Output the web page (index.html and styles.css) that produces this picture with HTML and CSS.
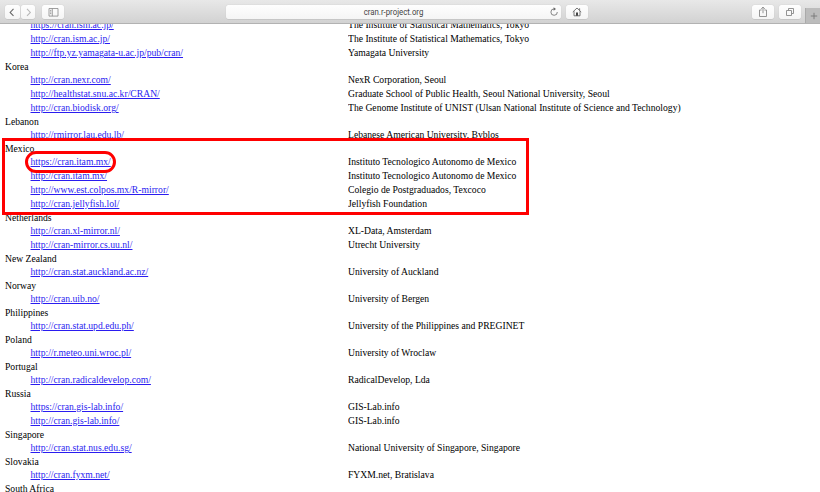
FILE: index.html
```html
<!DOCTYPE html>
<html lang="en">
<head>
<meta charset="utf-8">
<title>CRAN Mirrors</title>
<link rel="stylesheet" href="styles.css">
</head>
<body>
<header class="toolbar">
  <div class="nav">
    <span class="btn back"><svg width="15" height="15" viewBox="0 0 15 15"><path d="M8.8 3.8 5.3 7.4l3.5 3.6" stroke="#666" stroke-width="1.1"/></svg></span>
    <span class="btn forward"><svg width="15" height="15" viewBox="0 0 15 15"><path d="M6.2 3.8 9.7 7.4 6.2 11" stroke="#b8b8b8" stroke-width="1.1"/></svg></span>
  </div>
  <span class="btn sidebar"><svg width="11" height="9" viewBox="0 0 11 9"><path d="M1 .5h9v7.6H1zM4.3.5v7.6M2 2.4h1.3M2 4h1.3M2 5.6h1.3" stroke="#888" stroke-width=".8"/></svg></span>
  <div class="address"><span>cran.r-project.org</span><svg class="reload" width="10" height="10" viewBox="0 0 10 10"><path d="M5.2 1.9A3.2 3.2 0 1 0 8.3 5" stroke="#777" stroke-width=".9"/><path d="M4.6.2 7 2 4.6 3.7z" fill="#666"/></svg></div>
  <span class="btn home"><svg width="10" height="10" viewBox="0 0 10 10"><path d="M.8 5 5 1l4.2 4M2 4.2v4.6h6V4.2M7.6 3.2V1.3" stroke="#666" stroke-width=".9"/><path d="M4 5.6h2v3.2H4z" fill="#444"/></svg></span>
  <span class="btn share"><svg width="10" height="12" viewBox="0 0 10 12"><path d="M3.6 4H1.5v6.5h7V4H6.4M5 7.2V1.2M3.2 2.9 5 1.1l1.8 1.8" stroke="#888" stroke-width=".9"/></svg></span>
  <span class="btn tabs"><svg width="10" height="10" viewBox="0 0 10 10"><path d="M1.5 3.5h5v5h-5zM3.5 3.3V1.5h5v5H6.7" stroke="#888" stroke-width=".9"/></svg></span>
  <span class="newtab"><svg width="8" height="8" viewBox="0 0 8 8"><path d="M4 .8v6.4M.8 4h6.4" stroke="#777" stroke-width=".9"/></svg></span>
</header>
<main class="page">
  <dl class="mirrors">
    <dd><a>https://cran.ism.ac.jp/</a><span>The Institute of Statistical Mathematics, Tokyo</span></dd>
    <dd><a>http://cran.ism.ac.jp/</a><span>The Institute of Statistical Mathematics, Tokyo</span></dd>
    <dd><a>http://ftp.yz.yamagata-u.ac.jp/pub/cran/</a><span>Yamagata University</span></dd>
    <dt>Korea</dt>
    <dd><a>http://cran.nexr.com/</a><span>NexR Corporation, Seoul</span></dd>
    <dd><a>http://healthstat.snu.ac.kr/CRAN/</a><span>Graduate School of Public Health, Seoul National University, Seoul</span></dd>
    <dd><a>http://cran.biodisk.org/</a><span>The Genome Institute of UNIST (Ulsan National Institute of Science and Technology)</span></dd>
    <dt>Lebanon</dt>
    <dd><a>http://rmirror.lau.edu.lb/</a><span>Lebanese American University, Byblos</span></dd>
    <dt>Mexico</dt>
    <dd><a>https://cran.itam.mx/</a><span>Instituto Tecnologico Autonomo de Mexico</span></dd>
    <dd><a>http://cran.itam.mx/</a><span>Instituto Tecnologico Autonomo de Mexico</span></dd>
    <dd><a>http://www.est.colpos.mx/R-mirror/</a><span>Colegio de Postgraduados, Texcoco</span></dd>
    <dd><a>http://cran.jellyfish.lol/</a><span>Jellyfish Foundation</span></dd>
    <dt>Netherlands</dt>
    <dd><a>http://cran.xl-mirror.nl/</a><span>XL-Data, Amsterdam</span></dd>
    <dd><a>http://cran-mirror.cs.uu.nl/</a><span>Utrecht University</span></dd>
    <dt>New Zealand</dt>
    <dd><a>http://cran.stat.auckland.ac.nz/</a><span>University of Auckland</span></dd>
    <dt>Norway</dt>
    <dd><a>http://cran.uib.no/</a><span>University of Bergen</span></dd>
    <dt>Philippines</dt>
    <dd><a>http://cran.stat.upd.edu.ph/</a><span>University of the Philippines and PREGINET</span></dd>
    <dt>Poland</dt>
    <dd><a>http://r.meteo.uni.wroc.pl/</a><span>University of Wroclaw</span></dd>
    <dt>Portugal</dt>
    <dd><a>http://cran.radicaldevelop.com/</a><span>RadicalDevelop, Lda</span></dd>
    <dt>Russia</dt>
    <dd><a>https://cran.gis-lab.info/</a><span>GIS-Lab.info</span></dd>
    <dd><a>http://cran.gis-lab.info/</a><span>GIS-Lab.info</span></dd>
    <dt>Singapore</dt>
    <dd><a>http://cran.stat.nus.edu.sg/</a><span>National University of Singapore, Singapore</span></dd>
    <dt>Slovakia</dt>
    <dd><a>http://cran.fyxm.net/</a><span>FYXM.net, Bratislava</span></dd>
    <dt>South Africa</dt>
  </dl>
</main>
<div class="mark mark-country"></div>
<div class="mark mark-link"></div>
</body>
</html>
```
FILE: styles.css
```css
* { box-sizing: border-box; }
body {
  margin: 0;
  height: 492px;
  overflow: hidden;
  position: relative;
  display: flex;
  flex-direction: column;
  background: #fff;
  color: #000;
  font-family: "Liberation Serif", "Times New Roman", serif;
  font-size: 11px;
}
svg { display: block; fill: none; }
.toolbar {
  flex: none;
  height: 24px;
  display: flex;
  align-items: flex-start;
  padding: 5px 0 0 5px;
  background: linear-gradient(#e8e8e8, #d2d2d2);
  border-bottom: 1px solid #b2b2b2;
}
.btn {
  flex: none;
  width: 22px;
  height: 14px;
  display: flex;
  align-items: center;
  justify-content: center;
  border-radius: 2.5px;
  background: linear-gradient(#fefefe, #f5f5f5);
  box-shadow: 0 0 1px #bbb, 0 .5px .5px #bbb;
}
.nav { display: flex; gap: 1px; margin-right: 7px; }
.nav .btn { width: 14.5px; }
.sidebar { margin-right: 162px; }
.address {
  flex: none;
  width: 335px;
  height: 14px;
  margin-right: 5px;
  padding: 0 2px 0 12px;
  display: flex;
  align-items: center;
  border-radius: 2.5px;
  background: linear-gradient(#fefefe, #f5f5f5);
  box-shadow: 0 0 1px #bbb, 0 .5px .5px #bbb;
  color: #444;
  font: 9px/15px Roboto, "Liberation Sans", sans-serif;
}
.address span { flex: 1; text-align: center; transform: scaleX(.87); }
.home { margin-right: 164px; }
.share { margin-right: 5px; }
.newtab {
  margin: 3px 0 0 auto;
  width: 15px;
  height: 15px;
  padding: 4px 0 0 4px;
  background: #bcbcbc;
  border-left: 1px solid #aaa;
}
.page { flex: 1; min-height: 0; overflow: hidden; }
.mirrors { margin: -6px 0 0; padding-left: 5px; white-space: nowrap; }
.mirrors dt { height: 13px; line-height: 13px; }
.mirrors dd {
  margin: 0 0 0 25px;
  height: 14px;
  line-height: 13px;
  display: grid;
  grid-template-columns: 318px 1fr;
}
/* condensed text face */
.mirrors dt, .mirrors a, .mirrors span { transform: scaleX(.876); transform-origin: 0 50%; }
.mirrors a { justify-self: start; color: #2a1cf0; text-decoration: underline; }
.mirrors a { transform: translateX(.5px) scaleX(.876); }
.mark { position: absolute; border: 3px solid #f00; }
.mark-country { left: 2px; top: 138px; width: 527px; height: 77px; }
.mark-link { left: 25px; top: 151px; width: 91px; height: 22px; border-radius: 11px; }
```
